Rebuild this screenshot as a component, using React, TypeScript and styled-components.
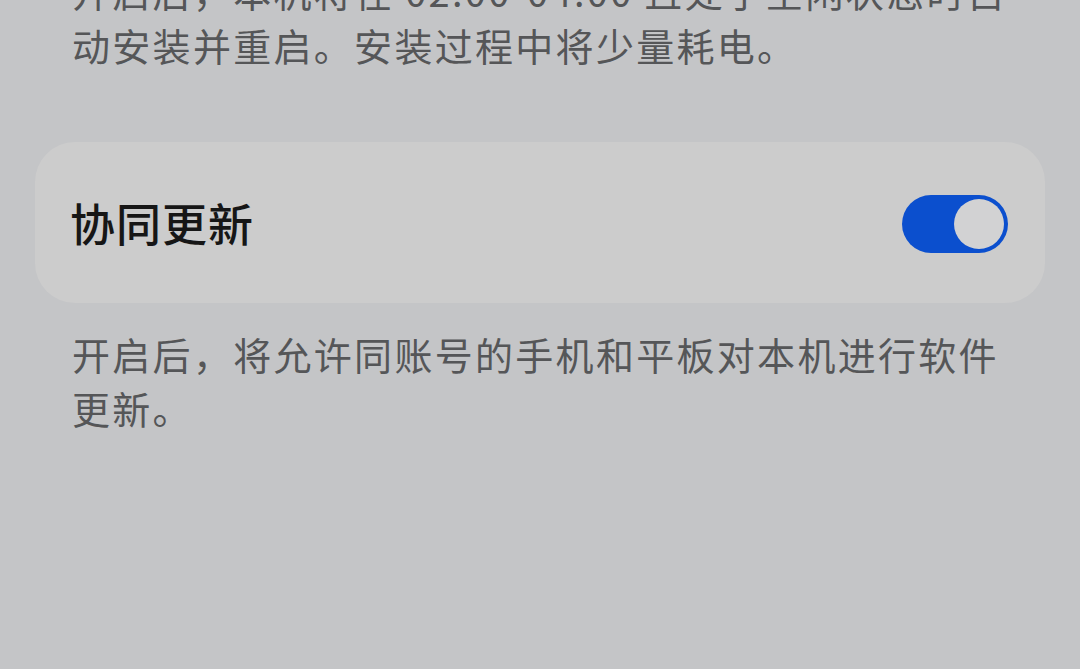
import React, { useState } from "react";
import styled, { createGlobalStyle } from "styled-components";

const GlobalStyle = createGlobalStyle`
  html, body {
    margin: 0;
    padding: 0;
    background: #c4c5c7;
    height: 100%;
    overflow: hidden;
  }
  body {
    font-family: "Noto Sans CJK SC", "Noto Sans", sans-serif;
    -webkit-font-smoothing: antialiased;
  }
`;

const Page = styled.div`
  display: flex;
  flex-direction: column;
  padding: 0 35px;
  height: 669px;
  box-sizing: border-box;
`;

// Helper text under a settings card; the first one scrolls past the top edge.
const Hint = styled.p<{ $clipTop?: boolean }>`
  margin: ${(p) => (p.$clipTop ? "-36px 0 0" : "24px 0 0")};
  padding: 0 36px 0 37px;
  font-size: 38px;
  line-height: 54px;
  letter-spacing: 2.3px;
  color: #555658;
`;

const Card = styled.div`
  margin-top: 70px;
  height: 161px;
  border-radius: 40px;
  background: #cccccc;
  display: flex;
  align-items: center;
  justify-content: space-between;
  padding: 0 37px;
  box-sizing: border-box;
`;

const Title = styled.span`
  font-size: 45px;
  font-weight: 500;
  color: #161616;
  letter-spacing: 1px;
  margin-left: -2px;
`;

const Switch = styled.button<{ $on: boolean }>`
  appearance: none;
  border: none;
  padding: 0;
  width: 106px;
  height: 58px;
  border-radius: 29px;
  background: ${(p) => (p.$on ? "#0b4fce" : "#9a9b9d")};
  position: relative;
  cursor: pointer;
  margin-top: 2px;

  &::after {
    content: "";
    position: absolute;
    top: 4px;
    left: ${(p) => (p.$on ? "52px" : "4px")};
    width: 50px;
    height: 50px;
    border-radius: 50%;
    background: #d2d2d3;
    transition: left 0.2s ease;
  }
`;

export default function App() {
  const [on, setOn] = useState(true);

  return (
    <>
      <GlobalStyle />
      <Page>
        <Hint $clipTop>
          开启后，本机将在 02:00-04:00 且处于空闲状态时自动安装并重启。安装过程中将少量耗电。
        </Hint>
        <Card>
          <Title>协同更新</Title>
          <Switch
            $on={on}
            role="switch"
            aria-checked={on}
            aria-label="协同更新"
            onClick={() => setOn((v) => !v)}
          />
        </Card>
        <Hint>开启后，将允许同账号的手机和平板对本机进行软件更新。</Hint>
      </Page>
    </>
  );
}
